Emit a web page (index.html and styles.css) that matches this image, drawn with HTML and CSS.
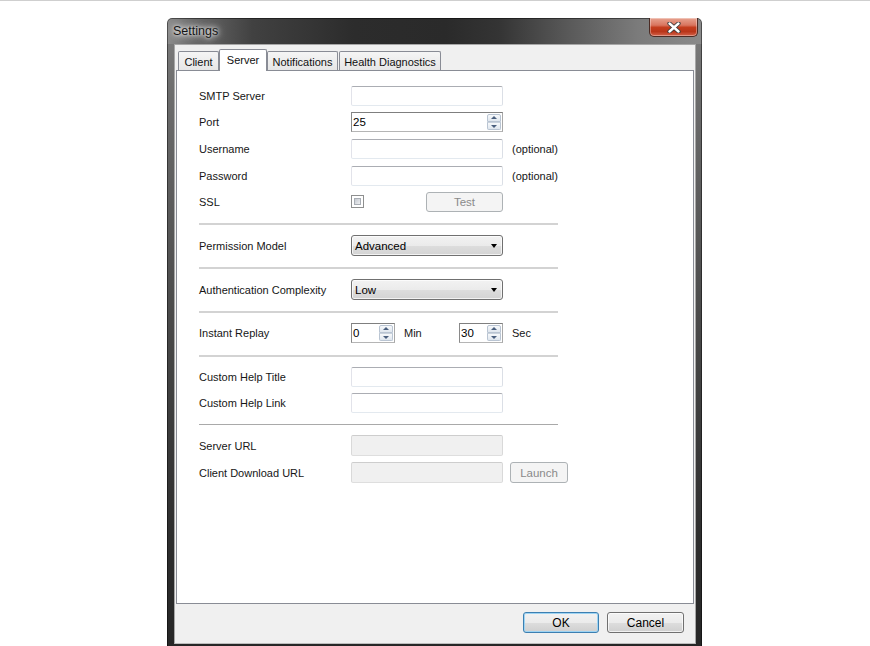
FILE: index.html
```html
<!DOCTYPE html>
<html>
<head>
<meta charset="utf-8">
<title>Settings</title>
<link rel="stylesheet" href="styles.css">
</head>
<body>
<div class="topline"></div>
<div class="window">
  <div class="titlebar">
    <span class="title">Settings</span>
    <div class="close">
      <svg width="14" height="11" viewBox="0 0 14 11">
        <path d="M2.5 1.5 L11.5 9.5 M11.5 1.5 L2.5 9.5" stroke="#3a3a3a" stroke-width="4.2" stroke-linecap="round" fill="none"/>
        <path d="M2.5 1.5 L11.5 9.5 M11.5 1.5 L2.5 9.5" stroke="#ffffff" stroke-width="2.4" stroke-linecap="round" fill="none"/>
      </svg>
    </div>
  </div>
  <div class="client">
    <div class="tabs">
      <div class="tab t-client">Client</div>
      <div class="tab active t-server">Server</div>
      <div class="tab t-notif">Notifications</div>
      <div class="tab t-health">Health Diagnostics</div>
    </div>
    <div class="panel">
      <div class="form">
        <div class="row r-first">
          <span class="label">SMTP Server</span>
          <span class="textbox"></span>
        </div>
        <div class="row r-6">
          <span class="label">Port</span>
          <span class="spin wide"><span class="spin-val">25</span><span class="spin-btns"><span class="sb up"></span><span class="sb down"></span></span></span>
        </div>
        <div class="row r-7">
          <span class="label">Username</span>
          <span class="textbox"></span>
          <span class="note">(optional)</span>
        </div>
        <div class="row r-7">
          <span class="label">Password</span>
          <span class="textbox"></span>
          <span class="note">(optional)</span>
        </div>
        <div class="row r-6">
          <span class="label">SSL</span>
          <span class="ctrl-cell">
            <span class="checkbox"></span>
            <span class="btn disabled test">Test</span>
          </span>
        </div>
        <div class="sep"></div>
        <div class="row r-10 tall">
          <span class="label">Permission Model</span>
          <span class="combo"><span>Advanced</span><span class="arrow"></span></span>
        </div>
        <div class="sep"></div>
        <div class="row r-10 tall">
          <span class="label">Authentication Complexity</span>
          <span class="combo"><span>Low</span><span class="arrow"></span></span>
        </div>
        <div class="sep"></div>
        <div class="row r-10">
          <span class="label">Instant Replay</span>
          <span class="spin small"><span class="spin-val">0</span><span class="spin-btns"><span class="sb up"></span><span class="sb down"></span></span></span>
          <span class="unit">Min</span>
          <span class="spin small"><span class="spin-val">30</span><span class="spin-btns"><span class="sb up"></span><span class="sb down"></span></span></span>
          <span class="note">Sec</span>
        </div>
        <div class="sep sep-mid"></div>
        <div class="row r-10">
          <span class="label">Custom Help Title</span>
          <span class="textbox"></span>
        </div>
        <div class="row r-6">
          <span class="label">Custom Help Link</span>
          <span class="textbox"></span>
        </div>
        <div class="sep sep-dark"></div>
        <div class="row r-10 tall">
          <span class="label">Server URL</span>
          <span class="textbox disabled"></span>
        </div>
        <div class="row r-6 tall">
          <span class="label">Client Download URL</span>
          <span class="textbox disabled"></span>
          <span class="btn disabled launch">Launch</span>
        </div>
      </div>
    </div>
    <div class="buttons">
      <span class="btn default ok">OK</span>
      <span class="btn cancel">Cancel</span>
    </div>
  </div>
</div>
</body>
</html>
```

FILE: styles.css
```css
html, body {
  margin: 0;
  padding: 0;
  background: #ffffff;
  overflow: hidden;
  width: 870px;
  height: 646px;
  font-family: "Liberation Sans", Arial, sans-serif;
  font-size: 11px;
  color: #111;
}

.topline {
  height: 1px;
  background: #cfcfcf;
}

.window {
  margin: 17px 0 0 167px;
  width: 535px;
  height: 640px;
  box-sizing: border-box;
  padding: 0 6px 0 7px;
  border-radius: 5px 5px 0 0;
  background:
    linear-gradient(to right, #8c8c8c 0%, #6a6a6a 5%, #414141 16%, #2c2c2c 35%, #2a2a2a 52%, #343434 62%, #595959 75%, #7b7b7b 88%, #8a8a8a 100%) top left / 100% 26px no-repeat,
    linear-gradient(to bottom, #7e7e7e 0px, #6c6c6c 80px, #4a4a4a 300px, #2e2e2e 520px, #262626 640px);
  box-shadow: inset 0 0 0 1px rgba(0,0,0,0.45);
}

.titlebar {
  height: 26px;
  display: flex;
  justify-content: space-between;
  align-items: flex-start;
}

.title {
  margin: 5px 0 0 -1px;
  font-size: 12.5px;
  color: #141414;
  line-height: 16px;
  padding: 0 4px 0 0;
  text-shadow: 0 0 6px rgba(255,255,255,0.95), 0 0 10px rgba(255,255,255,0.8), 0 0 3px rgba(255,255,255,0.7);
}

.close {
  width: 49px;
  height: 19px;
  margin-right: -2px;
  box-sizing: border-box;
  border: 1px solid #4b2b24;
  border-top: none;
  border-radius: 0 0 5px 5px;
  background: linear-gradient(to bottom, #e7a390 0%, #d9755f 40%, #c43d1e 52%, #b93519 75%, #d3624a 100%);
  box-shadow: inset 0 0 0 1px rgba(255,255,255,0.35);
  display: flex;
  align-items: center;
  justify-content: center;
}

.client {
  height: 600px;
  box-sizing: border-box;
  border: 1px solid #a7a7a7;
  border-bottom-color: #bdbdbd;
  background: #f0f0f0;
  padding-top: 4px;
}

.tabs {
  display: flex;
  align-items: flex-end;
  height: 21px;
  padding-left: 3px;
}

.tab {
  height: 19px;
  box-sizing: border-box;
  border: 1px solid #898c95;
  border-bottom: none;
  border-radius: 2px 2px 0 0;
  background: linear-gradient(to bottom, #f5f5f5, #e6e6e6);
  display: flex;
  align-items: center;
  justify-content: center;
  color: #111;
  padding-top: 1px;
}

.tab.active {
  height: 22px;
  margin-bottom: -1px;
  background: #ffffff;
  position: relative;
  z-index: 1;
  padding-top: 0;
  padding-bottom: 2px;
}

.t-client { width: 41px; }
.t-server { width: 48px; }
.t-notif { width: 71px; }
.t-health { width: 102px; margin-left: 1px; }

.panel {
  height: 534px;
  box-sizing: border-box;
  margin: 0 1px 0 1px;
  border: 1px solid #898c95;
  background: #ffffff;
}

.form {
  padding: 15px 0 0 22px;
}

.row {
  display: flex;
  align-items: center;
  height: 20px;
}

.row.tall { height: 21px; }

.r-6 { margin-top: 6px; }
.r-7 { margin-top: 7px; }
.r-10 { margin-top: 10px; }

.label {
  width: 152px;
  flex: none;
  color: #161616;
}

.textbox {
  width: 152px;
  height: 20px;
  box-sizing: border-box;
  border: 1px solid;
  border-color: #abadb3 #dbdfe6 #e3e9ef #e2e3ea;
  border-radius: 2px;
  background: #fff;
}

.row.tall .textbox { height: 21px; }

.textbox.disabled {
  background: #f0f0f0;
  border-color: #cdcdcd #d9d9d9 #dedede #d9d9d9;
}

.note {
  margin-left: 9px;
  color: #161616;
}

.unit {
  margin-left: 9px;
  width: 55px;
  flex: none;
  color: #161616;
}

.spin {
  height: 20px;
  box-sizing: border-box;
  border: 1px solid #8a8a8a;
  border-color: #7f7f7f #a8a8a8 #b5b5b5 #8a8a8a;
  background: #fff;
  display: flex;
  align-items: center;
  justify-content: space-between;
  padding: 0 1px 0 1px;
  flex: none;
}

.spin.wide { width: 152px; }
.spin.small { width: 44px; }

.spin-val {
  line-height: 16px;
  color: #000;
  font-size: 11.5px;
}

.spin-btns {
  display: flex;
  flex-direction: column;
  width: 14px;
  height: 16px;
}

.sb {
  flex: 1;
  box-sizing: border-box;
  border: 1px solid #b9c4d2;
  background: linear-gradient(to bottom, #f7f9fb, #dfe6ee);
  position: relative;
}

.sb.up { border-radius: 2px 2px 0 0; }
.sb.down { border-radius: 0 0 2px 2px; border-top-color: #c9d2dd; }

.sb::after {
  content: "";
  position: absolute;
  left: 50%;
  top: 50%;
  margin-left: -3px;
  width: 0;
  height: 0;
  border-left: 3px solid transparent;
  border-right: 3px solid transparent;
}

.sb.up::after {
  margin-top: -2px;
  border-bottom: 3px solid #4a5f7e;
}

.sb.down::after {
  margin-top: -1px;
  border-top: 3px solid #4a5f7e;
}

.ctrl-cell {
  width: 152px;
  display: flex;
  align-items: center;
  justify-content: space-between;
}

.checkbox {
  width: 13px;
  height: 13px;
  box-sizing: border-box;
  border: 1px solid #8e8f8f;
  background: #fff;
  padding: 2px;
  margin-top: -1px;
}

.checkbox::after {
  content: "";
  display: block;
  width: 7px;
  height: 7px;
  box-sizing: border-box;
  border: 1px solid #a9aeb5;
  background: linear-gradient(135deg, #c5cad1, #eeeff1);
}

.btn {
  display: inline-flex;
  align-items: center;
  justify-content: center;
  box-sizing: border-box;
  border: 1px solid #707070;
  border-radius: 3px;
  background: linear-gradient(to bottom, #f2f2f2 0%, #ebebeb 50%, #dddddd 51%, #cfcfcf 100%);
  box-shadow: inset 0 0 0 1px rgba(255,255,255,0.7);
  color: #000;
  font-size: 11.5px;
}

.btn.disabled {
  background: #f4f4f4;
  border-color: #adb2b5;
  color: #8a8a8a;
  box-shadow: none;
}

.test {
  width: 77px;
  height: 20px;
}

.launch {
  width: 58px;
  height: 21px;
  margin-left: 7px;
}

.combo {
  width: 152px;
  height: 21px;
  box-sizing: border-box;
  border: 1px solid #707070;
  border-radius: 3px;
  background: linear-gradient(to bottom, #f2f2f2 0%, #ebebeb 50%, #dddddd 51%, #d3d3d3 100%);
  box-shadow: inset 0 0 0 1px rgba(255,255,255,0.7);
  display: flex;
  align-items: center;
  justify-content: space-between;
  padding: 1px 4px 0 3px;
  font-size: 11.5px;
  color: #000;
}

.arrow {
  width: 0;
  height: 0;
  border-left: 3.5px solid transparent;
  border-right: 3.5px solid transparent;
  border-top: 4px solid #000;
  margin-right: 1px;
}

.sep {
  width: 359px;
  height: 2px;
  background: #d3d3d3;
  margin-top: 11px;
}

.sep-mid { margin-top: 12px; }

.sep-dark {
  height: 1px;
  background: #a9a9a9;
  margin-top: 11px;
  margin-bottom: 1px;
}

.buttons {
  display: flex;
  justify-content: flex-end;
  gap: 8px;
  padding: 8px 11px 0 0;
}

.buttons .btn {
  height: 21px;
  font-size: 12px;
}

.ok { width: 76px; }
.cancel { width: 77px; }

.btn.default {
  border-color: #3c7fb1;
  box-shadow: inset 0 0 0 1px #9ed4f3;
}
```
